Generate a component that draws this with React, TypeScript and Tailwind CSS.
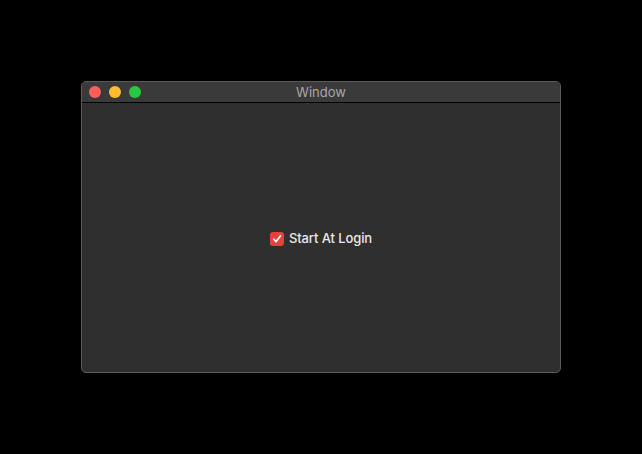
export default function App() {
  return (
    <div
      className="w-[642px] h-[454px] bg-black flex items-center justify-center"
      style={{ fontFamily: '"Inter", "Liberation Sans", sans-serif' }}
    >
      <div className="w-[480px] h-[292px] flex flex-col rounded-[5px] border border-[#5a5a5a] bg-[#2f2f2f] overflow-hidden">
        <div className="relative h-[21px] shrink-0 flex items-center bg-[#3a3a3a] border-b border-black">
          <div className="flex items-center gap-[8px] pl-[7px]">
            <span className="w-[12px] h-[12px] rounded-full bg-[#fe5f57]" />
            <span className="w-[12px] h-[12px] rounded-full bg-[#febc2e]" />
            <span className="w-[12px] h-[12px] rounded-full bg-[#28c840]" />
          </div>
          <div className="absolute inset-0 pt-[2px] flex items-center justify-center text-[13px] text-[#a8a8a8]">
            Window
          </div>
        </div>
        <div className="flex-1 flex items-center justify-center pt-[3px]">
          <label className="flex items-center gap-[5px] text-[13px] font-medium tracking-[-0.1px] text-[#e8e8e8]">
            <span className="w-[14px] h-[14px] rounded-[3px] bg-[#e8403a] flex items-center justify-center">
              <svg width="10" height="10" viewBox="0 0 10 10" fill="none">
                <path d="M1.8 5.2 L4 7.6 L8.4 2" stroke="white" strokeWidth="1.7" strokeLinecap="round" strokeLinejoin="round" />
              </svg>
            </span>
            Start At Login
          </label>
        </div>
      </div>
    </div>
  )
}
